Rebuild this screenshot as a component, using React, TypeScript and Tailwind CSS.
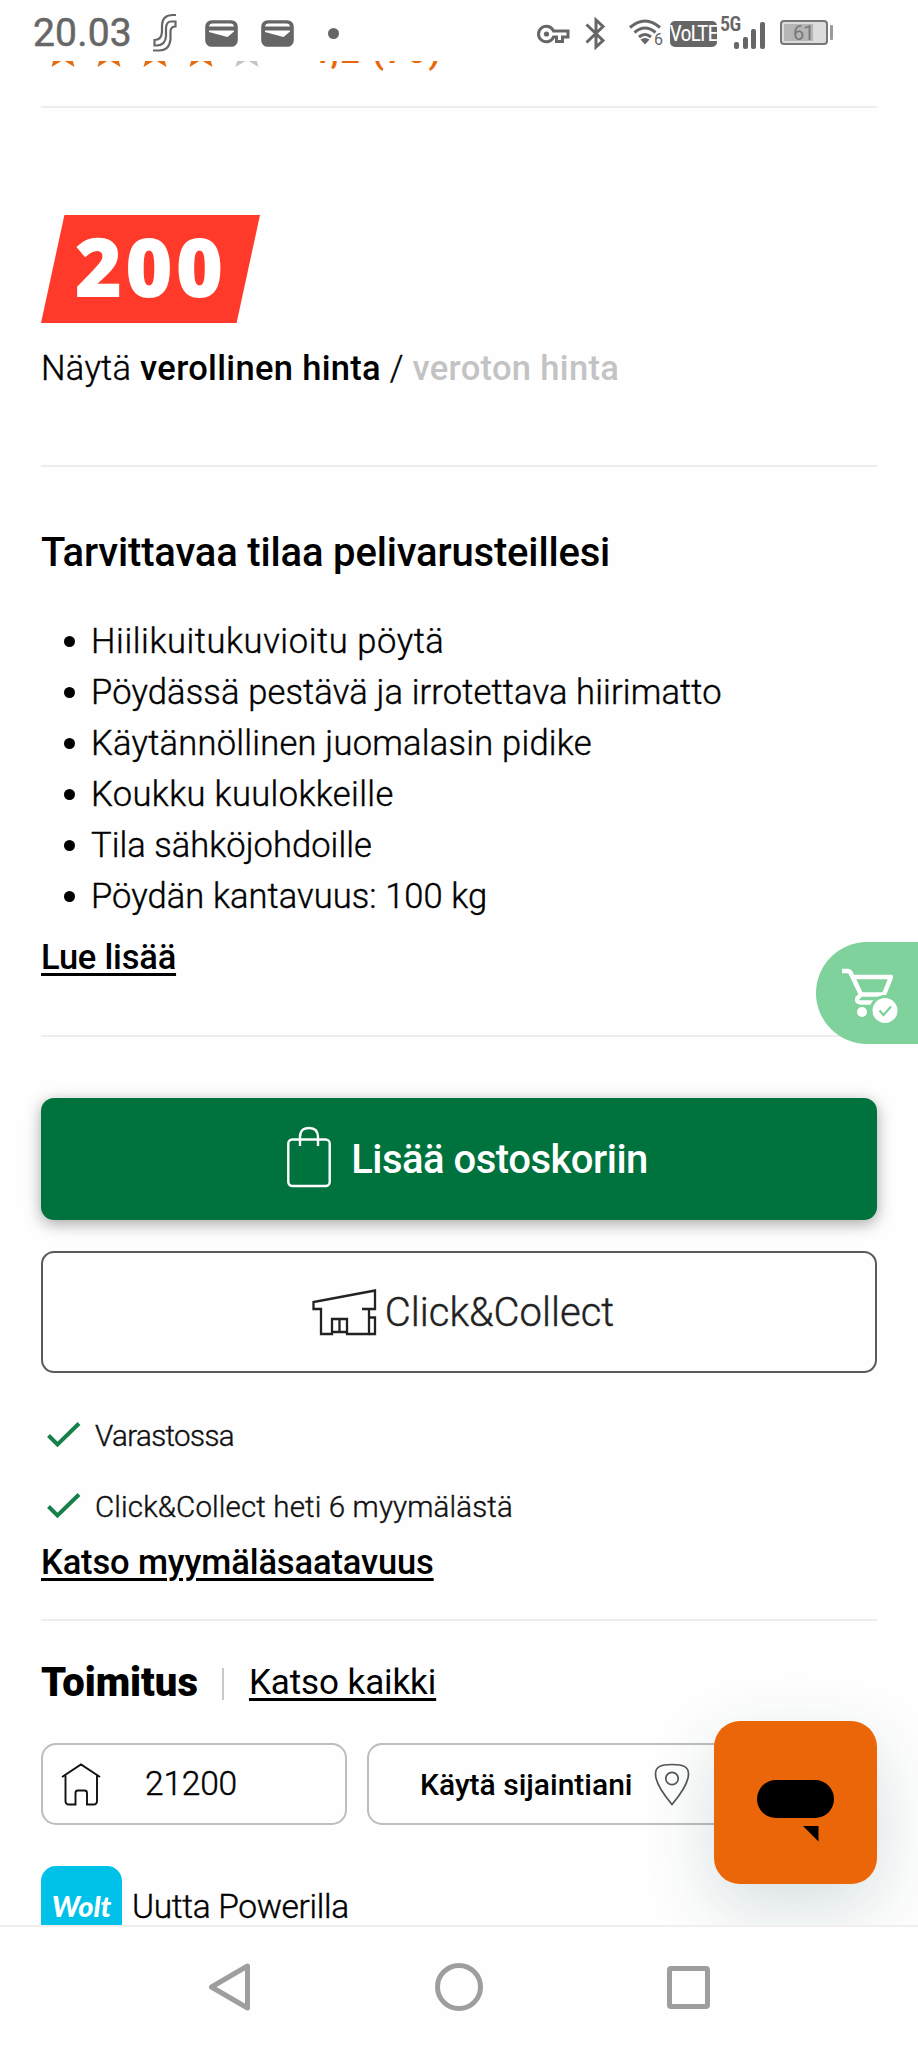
const FEATURES = [
  { text: 'Hiilikuitukuvioitu pöytä', tracking: 'tracking-[0.6px]' },
  { text: 'Pöydässä pestävä ja irrotettava hiirimatto', tracking: 'tracking-[0.15px]' },
  { text: 'Käytännöllinen juomalasin pidike', tracking: 'tracking-[0.24px]' },
  { text: 'Koukku kuulokkeille', tracking: 'tracking-[0.4px]' },
  { text: 'Tila sähköjohdoille', tracking: 'tracking-[0.05px]' },
  { text: 'Pöydän kantavuus: 100 kg', tracking: 'tracking-[0.08px]' },
];

const STAR = 'M18 1 L23 13 L36 14 L26 22.5 L29.5 35 L18 28 L6.5 35 L10 22.5 L0 14 L13 13 Z';

function WalletIcon() {
  return (
    <svg width="33" height="27" viewBox="0 0 33 27">
      <rect x="1.2" y="1.2" width="30.6" height="24.6" rx="5.5" fill="#666" stroke="#666" strokeWidth="2" />
      <path d="M4 6.5 Q4.500 3.500 7.500 3.500 H25.500 Q28.500 3.500 29 6.500 Z" fill="#fefefe" />
      <path d="M4 10.5 H29 V11.5 L22.5 17 L4 12 Z" fill="#fefefe" />
    </svg>
  );
}

function StatusBar() {
  return (
    <header className="flex h-[61px] items-start bg-[#fefefe] text-[#666]">
      <span className="ml-[33px] w-[120px] pt-[10px] text-[39px] leading-[46px] tracking-[0.2px] [-webkit-text-stroke:0.5px]">20.03</span>
      <svg className="mt-[13px]" width="26" height="40" viewBox="0 0 26 40" fill="none" stroke="#666" strokeWidth="2.2">
        <path d="M23 2 H20 Q9.500 2 9 12 V19 Q8.500 27 1.500 27 V32.500 H4 Q12.500 32 13 23 V15 Q13.500 8.500 18 8.500 H22.500 V13.500 Q18 13.500 17.500 18 V26 Q16.500 37.500 6 37.500 H0" />
      </svg>
      <div className="mt-[20px] ml-[26px] flex gap-[23px]">
        <WalletIcon />
        <WalletIcon />
      </div>
      <span className="mt-[28px] ml-[34px] size-[11px] rounded-full bg-[#666]" />

      <svg className="mt-[24px] ml-[198px]" width="34" height="20" viewBox="0 0 34 20" fill="none" stroke="#666" strokeWidth="3">
        <path d="M16.500 7 A7.800 7.800 0 1 0 16.500 13 H19.500 V17.500 H25.500 V13 H31 V7 Z" />
        <circle cx="9.5" cy="10" r="2.6" fill="#666" stroke="none" />
      </svg>
      <svg className="mt-[17px] ml-[14px]" width="21" height="33" viewBox="0 0 21 33" fill="none" stroke="#666" strokeWidth="3">
        <path d="M1.500 7.500 L18 23.500 L11 30 V3 L18 9.500 L1.500 25.500" />
      </svg>
      <div className="mt-[19px] ml-[23px] flex">
        <svg width="32" height="26" viewBox="0 0 32 26" fill="none" stroke="#666" strokeWidth="3">
          <path d="M1 8.500 Q16 -4.500 31 8.500" />
          <path d="M5.500 13.500 Q16 4.500 26.500 13.500" />
          <path d="M10 18 Q16 13 22 18" />
          <path d="M11.500 20.500 Q16 17.500 20.500 20.500 L16 25.500 Z" fill="#666" stroke="none" />
        </svg>
        <span className="mt-[13px] -ml-[7px] w-[10px] text-[16px] leading-[16px]">6</span>
      </div>
      <span className="mt-[21px] ml-[6px] flex h-[26px] w-[47px] shrink-0 items-center justify-center rounded-[5px] bg-[#666] text-[#fefefe]">
        <span className="text-[22px] leading-[26px] tracking-[-1px] [font-stretch:75%]">VoLTE</span>
      </span>
      <span className="mt-[15px] ml-[3px] w-[19px] text-[20px] leading-[18px] font-semibold tracking-[-0.5px] [font-stretch:75%]">5G</span>
      <div className="mt-[22px] -ml-[5px] flex h-[27px] items-end gap-[3.5px]">
        <span className="h-[7px] w-[5px] rounded-[2px] bg-[#666]" />
        <span className="h-[12px] w-[5px] rounded-[2px] bg-[#666]" />
        <span className="h-[20px] w-[5px] rounded-[2px] bg-[#666]" />
        <span className="h-[27px] w-[5px] rounded-[2px] bg-[#666]" />
      </div>
      <div className="mt-[20px] ml-[15.5px] flex items-center gap-[2px]">
        <span className="flex h-[25px] w-[48px] items-center rounded-[4px] border-2 border-[#777] bg-[#dcdcdc] p-[2px]">
          <span className="flex h-full w-[29px] items-center bg-[#b5b5b5] pl-[9px] text-[20px] leading-none tracking-[-1px] text-[#777]">61</span>
        </span>
        <span className="-mt-px h-[15px] w-[3px] rounded-[1px] bg-[#999]" />
      </div>
    </header>
  );
}

function Rating() {
  return (
    <div className="h-[45px] overflow-hidden">
      <div className="-mt-[29px] flex items-start pl-[4px]">
        <div className="flex gap-[10px]">
          {[1, 2, 3, 4, 5].map((n) => (
            <svg key={n} width="36" height="36" viewBox="0 0 36 36" fill={n < 5 ? '#e26b10' : '#c4c4c4'}>
              <path d={STAR} />
            </svg>
          ))}
        </div>
        <span className="-mt-[7px] ml-[44px] text-[34.5px] leading-[52px] font-semibold tracking-[1.7px] text-[#eb6608]">
          4,2 (70)
        </span>
      </div>
    </div>
  );
}

function Divider() {
  return <hr className="h-[2px] w-full border-0 bg-[#ededed]" />;
}

function CheckRow({ text, className }: { text: string; className: string }) {
  return (
    <div className="flex h-[44px] items-center gap-[14px] pl-[6px]">
      <svg className="-mt-[3px]" width="34" height="26" viewBox="0 0 34 26" fill="none" stroke="#15804a" strokeWidth="4">
        <path d="M1.500 13.500 L10.500 22.500 L32 1.500" />
      </svg>
      <span className={`text-[29.5px] leading-[44px] font-light text-[#111] [-webkit-text-stroke:0.4px] ${className}`}>{text}</span>
    </div>
  );
}

function BagIcon() {
  return (
    <svg className="-mt-[4px]" width="44" height="62" viewBox="0 0 44 62" fill="none" stroke="#fff" strokeWidth="2.4">
      <rect x="1.3" y="13.5" width="41.4" height="46.5" rx="4" />
      <path d="M13 20 V11 Q13 2 22 2 Q31 2 31 11 V20" />
    </svg>
  );
}

function StoreIcon() {
  return (
    <svg width="65" height="47" viewBox="0 0 65 47" fill="none" stroke="#222" strokeWidth="2.3">
      <path d="M50 20 H63 V1.500 L1.500 13 V20 H9 V45 H20 V30 H35 V45 H57 V20" />
      <path d="M57 28.500 H63 V45 H57" />
      <path d="M20 43 H35 M27.500 30 V43" />
    </svg>
  );
}

function HomeIcon() {
  return (
    <svg width="40" height="43" viewBox="0 0 40 43" fill="none" stroke="#111" strokeWidth="1.9">
      <path d="M1 14 L20 1.500 L39 14 M4.500 12.500 V38 Q4.500 41.500 8 41.500 H14.500 V30 Q14.500 27.500 17 27.500 H23.500 Q26 27.500 26 30 V41.500 H32.500 Q36 41.500 36 38 V12.500" />
    </svg>
  );
}

function PinIcon() {
  return (
    <svg width="36" height="43" viewBox="0 0 36 43" fill="none" stroke="#555" strokeWidth="1.7">
      <path d="M18 41.500 C10 32 1.500 20 1.500 11 C1.500 4 6 1.500 18 1.500 C30 1.500 34.500 4 34.500 11 C34.500 20 26 32 18 41.500 Z" />
      <circle cx="18" cy="15.5" r="6.2" />
    </svg>
  );
}

function CartTab() {
  return (
    <div className="absolute top-[942px] right-0 h-[102px] w-[102px] rounded-l-full bg-[#7fd29b]">
      <svg className="mt-[26px] ml-[25px]" width="58" height="58" viewBox="0 0 58 58" fill="none" stroke="#fff" strokeWidth="4.5">
        <path d="M1 3 H6.500 Q9 3 10 5.500 L20 26.500 M11 9 H50 L43 26.500 H20 L16.500 30 Q15 34.500 19.500 34.500 H36" strokeLinejoin="round" />
        <circle cx="21" cy="44" r="5" fill="#fff" stroke="none" />
        <circle cx="44" cy="42.5" r="15.5" fill="#7fd29b" stroke="none" />
        <circle cx="44" cy="42.5" r="12.5" fill="#fff" stroke="none" />
        <path d="M38.500 42.500 L42.500 47 L50 38.500" stroke="#7fd29b" strokeWidth="2.2" />
      </svg>
    </div>
  );
}

function ChatButton() {
  return (
    <div className="absolute top-[1721px] right-[41px] flex h-[163px] w-[163px] items-start justify-center rounded-[26px] bg-[#eb6608] shadow-[0_24px_70px_rgba(0,60,60,0.16)]">
      <svg className="mt-[59px]" width="77" height="62" viewBox="0 0 77 62">
        <rect width="77" height="38" rx="19" />
        <path d="M46 46 H61.500 V61.500 Z" />
      </svg>
    </div>
  );
}

function NavBar() {
  return (
    <nav className="relative flex h-[123px] items-start border-t-2 border-[#f0efee] bg-[#fefefe] pt-[35px]">
      <svg className="ml-[207px]" width="45" height="52" viewBox="0 0 45 52" fill="none" stroke="#9e9e9e" strokeWidth="5" strokeLinejoin="round">
        <path d="M4.500 25 L40.500 4 V46 Z" />
      </svg>
      <span className="mt-px ml-[183px] size-[48px] rounded-full border-[5.5px] border-[#9e9e9e]" />
      <span className="mt-[4px] ml-[184px] size-[43px] rounded-[4px] border-[5px] border-[#9e9e9e]" />
    </nav>
  );
}

export default function App() {
  return (
    <div className="relative flex h-[2048px] w-[918px] flex-col overflow-hidden bg-[#fefefe] font-['Roboto',sans-serif] text-black">
      <StatusBar />
      <main className="h-[1864px] overflow-hidden px-[41px]">
        <Rating />
        <Divider />

        <section className="pt-[107px] pb-[71px]">
          <div className="flex h-[108px] w-[219px] items-center justify-center bg-[#ff3a2a] [clip-path:polygon(10.7%_0,100%_0,89.3%_100%,0_100%)]">
            <span className="-mt-[7px] font-['Open_Sans',sans-serif] text-[81px] leading-none font-extrabold tracking-[3px] text-white">200</span>
          </div>
          <p className="mt-[19px] text-[34.5px] leading-[52px] font-light tracking-[0.32px] whitespace-nowrap">
            <span className="[-webkit-text-stroke:0.4px]">Näytä</span> <span className="font-medium">verollinen hinta</span>{' '}
            <span className="[-webkit-text-stroke:0.4px]">/</span> <span className="font-medium text-[#c3c3c3]">veroton hinta</span>
          </p>
        </section>
        <Divider />

        <section className="pt-[56px] pb-[52px]">
          <h2 className="text-[40px] leading-[60px] font-medium tracking-[-0.17px]">Tarvittavaa tilaa pelivarusteillesi</h2>
          <ul className="mt-[33px] pl-[23px]">
            {FEATURES.map((f) => (
              <li key={f.text} className="flex h-[51px] items-center gap-[16px]">
                <span className="size-[11px] rounded-full bg-black" />
                <span className={`text-[34.5px] leading-[51px] font-light whitespace-nowrap [-webkit-text-stroke:0.4px] ${f.tracking}`}>
                  {f.text}
                </span>
              </li>
            ))}
          </ul>
          <a className="mt-[9px] block w-fit text-[34.5px] leading-[52px] font-medium tracking-[-0.2px] underline decoration-[3px] underline-offset-[4px]">
            Lue lisää
          </a>
        </section>
        <Divider />

        <section className="pt-[61px] pb-[31px]">
          <button className="flex h-[122px] w-full items-center justify-center gap-[20px] rounded-[13px] bg-[#00723e] pl-[17px] text-[40px] font-medium tracking-[-0.5px] text-white shadow-[0_4px_16px_rgba(0,0,0,0.35)]">
            <BagIcon />
            <span className="pt-[2px]">Lisää ostoskoriin</span>
          </button>
          <button className="mt-[31px] flex h-[122px] w-full items-center justify-center gap-[8px] rounded-[13px] border-2 border-[#5a5a5a] pl-[8px] text-[40px] font-light text-[#222]">
            <StoreIcon />
            <span className="pt-[2px] [-webkit-text-stroke:0.4px]">Click&amp;Collect</span>
          </button>
          <div className="mt-[41px] flex flex-col gap-[27px]">
            <CheckRow text="Varastossa" className="tracking-[-0.6px]" />
            <CheckRow text="Click&Collect heti 6 myymälästä" className="tracking-[0.14px]" />
          </div>
          <a className="mt-[7px] block w-fit text-[34.5px] leading-[52px] font-medium tracking-[-0.14px] underline decoration-[3px] underline-offset-[4px]">
            Katso myymäläsaatavuus
          </a>
        </section>
        <Divider />

        <section className="pt-[32px]">
          <div className="flex h-[60px] items-center">
            <h3 className="text-[40px] leading-[60px] font-black">Toimitus</h3>
            <span className="mt-[1px] ml-[24px] h-[32px] w-[2px] bg-[#c8c8c8]" />
            <a className="mb-[1px] ml-[25px] text-[35px] leading-[52px] tracking-[-0.1px] underline decoration-[3px] underline-offset-[4px]">
              Katso kaikki
            </a>
          </div>
          <div className="mt-[30px] flex gap-[20px]">
            <div className="flex h-[82px] w-[306px] items-center rounded-[15px] border-2 border-[#bdbdbd] pl-[18px]">
              <HomeIcon />
              <span className="ml-[44px] text-[33.5px] font-light tracking-[-0.2px] [-webkit-text-stroke:0.4px]">21200</span>
            </div>
            <button className="flex h-[82px] flex-1 items-center rounded-[15px] border-2 border-[#bdbdbd] pl-[51px]">
              <span className="text-[30px] font-medium">Käytä sijaintiani</span>
              <span className="ml-[21px]">
                <PinIcon />
              </span>
            </button>
          </div>
          <div className="mt-[41px] flex h-[82px] items-center gap-[10px]">
            <div className="flex h-[82px] w-[81px] items-center justify-center rounded-[15px] bg-[#00c2e8]">
              <span className="-mt-[3px] font-['Lato',sans-serif] text-[29px] leading-none font-black text-white italic">Wolt</span>
            </div>
            <span className="text-[33.5px] font-light tracking-[-0.33px] [-webkit-text-stroke:0.4px]">Uutta Powerilla</span>
          </div>
        </section>
      </main>
      <CartTab />
      <ChatButton />
      <NavBar />
    </div>
  );
}
